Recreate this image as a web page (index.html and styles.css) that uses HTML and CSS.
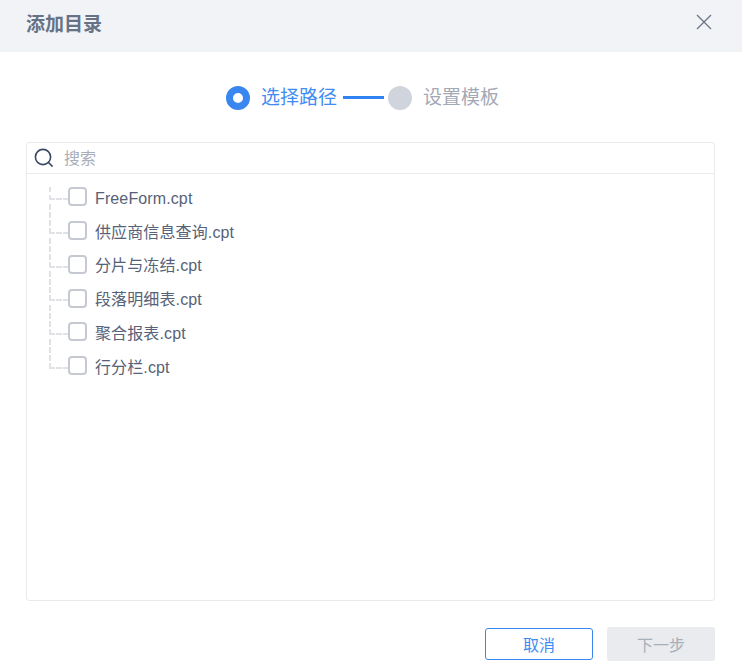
FILE: index.html
```html
<!DOCTYPE html>
<html lang="zh">
<head>
<meta charset="utf-8">
<title>添加目录</title>
<link rel="stylesheet" href="styles.css">
</head>
<body>
<div class="dialog">
  <header class="head">
    <h1 class="title">添加目录</h1>
    <button class="close" aria-label="关闭">
      <svg width="16" height="16" viewBox="0 0 16 16"><path d="M1 1L15 15M15 1L1 15" stroke="#6b7487" stroke-width="1.3" fill="none"/></svg>
    </button>
  </header>
  <div class="steps">
    <span class="dot dot-on"></span>
    <span class="step-label on">选择路径</span>
    <span class="link"></span>
    <span class="dot dot-off"></span>
    <span class="step-label off">设置模板</span>
  </div>
  <section class="panel">
    <div class="search">
      <svg class="search-icon" width="20" height="20" viewBox="0 0 20 20"><circle cx="9" cy="9" r="7.6" stroke="#3b4a62" stroke-width="1.6" fill="none"/><path d="M14.5 14.5L18.6 18.6" stroke="#3b4a62" stroke-width="1.6" fill="none"/></svg>
      <span class="placeholder">搜索</span>
    </div>
    <ul class="tree">
      <li class="row"><span class="check"></span><span class="name">FreeForm.cpt</span></li>
      <li class="row"><span class="check"></span><span class="name">供应商信息查询.cpt</span></li>
      <li class="row"><span class="check"></span><span class="name">分片与冻结.cpt</span></li>
      <li class="row"><span class="check"></span><span class="name">段落明细表.cpt</span></li>
      <li class="row"><span class="check"></span><span class="name">聚合报表.cpt</span></li>
      <li class="row"><span class="check"></span><span class="name">行分栏.cpt</span></li>
    </ul>
  </section>
  <footer class="foot">
    <button class="btn btn-line">取消</button>
    <button class="btn btn-off">下一步</button>
  </footer>
</div>
</body>
</html>
```
FILE: styles.css
```css
* { box-sizing: border-box; }
html, body { margin: 0; padding: 0; background: #fff; }
body {
  width: 742px;
  height: 671px;
  overflow: hidden;
  font-family: "Liberation Sans", "Noto Sans CJK SC", sans-serif;
  color: #4d5a70;
}
.dialog { display: flex; flex-direction: column; height: 671px; }
.head {
  height: 52px;
  flex: none;
  background: #f1f3f7;
  display: flex;
  align-items: center;
  justify-content: space-between;
  padding: 0 30px 2px 26px;
}
.title { margin: 0; font-size: 19px; line-height: 26px; font-weight: 700; color: #667285; }
.close { border: 0; padding: 0; background: none; display: flex; margin-top: -6px; }
.steps {
  flex: none;
  height: 90px;
  display: flex;
  align-items: center;
  justify-content: center;
  padding-top: 1px;
  padding-right: 17px;
}
.dot { width: 24px; height: 24px; border-radius: 50%; flex: none; }
.dot-on { background: #fff; border: 7px solid #3a86f0; }
.dot-off { background: #d0d4dc; }
.step-label { font-size: 19px; line-height: 26px; margin-top: 1px; }
.step-label.on { color: #3f8cf2; margin: 0 6px 0 11px; }
.step-label.off { color: #a3a9b5; margin-left: 11px; }
.link { width: 41px; height: 3px; background: #2f83f3; margin-right: 4px; }
.panel {
  flex: none;
  margin: 0 27px 0 26px;
  height: 459px;
  border: 1px solid #e8eaee;
  border-radius: 3px;
  display: flex;
  flex-direction: column;
}
.search {
  height: 31px;
  flex: none;
  border-bottom: 1px solid #e8eaee;
  display: flex;
  align-items: center;
  padding-left: 7px;
}
.search-icon { flex: none; }
.placeholder { font-size: 16px; line-height: 22px; color: #a8aeb9; margin-left: 10px; margin-top: 2px; }
.tree { list-style: none; margin: 0; padding: 7px 0 0 41px; }
.row {
  position: relative;
  height: 33.75px;
  display: flex;
  align-items: center;
}
.row::before {
  content: "";
  position: absolute;
  left: -19px;
  width: 18px;
  top: -11px;
  height: 28px;
  border-left: 2px dashed #e0e2e6;
  border-bottom: 2px dashed #e0e2e6;
}
.row:first-child::before { top: 6px; height: 11px; }
.check {
  width: 19px;
  height: 19px;
  flex: none;
  border: 2px solid #c5c9d1;
  border-radius: 4px;
  background: #fff;
  position: relative;
  z-index: 1;
  margin-top: -2px;
}
.name { font-size: 16px; line-height: 22px; margin-left: 8px; color: #566277; letter-spacing: .12px; margin-top: 2px; }
.foot {
  flex: none;
  display: flex;
  justify-content: flex-end;
  align-items: center;
  gap: 14px;
  padding: 26px 27px 0 0;
}
.btn {
  width: 108px;
  font-family: inherit;
  font-size: 16px;
  padding: 0;
  border-radius: 3px;
}
.btn-line { height: 32px; background: #fff; border: 1px solid #3a86f0; color: #3f8cf2; }
.btn-off { height: 34px; background: #e9ebef; border: 0; color: #a8aeb9; }
```
